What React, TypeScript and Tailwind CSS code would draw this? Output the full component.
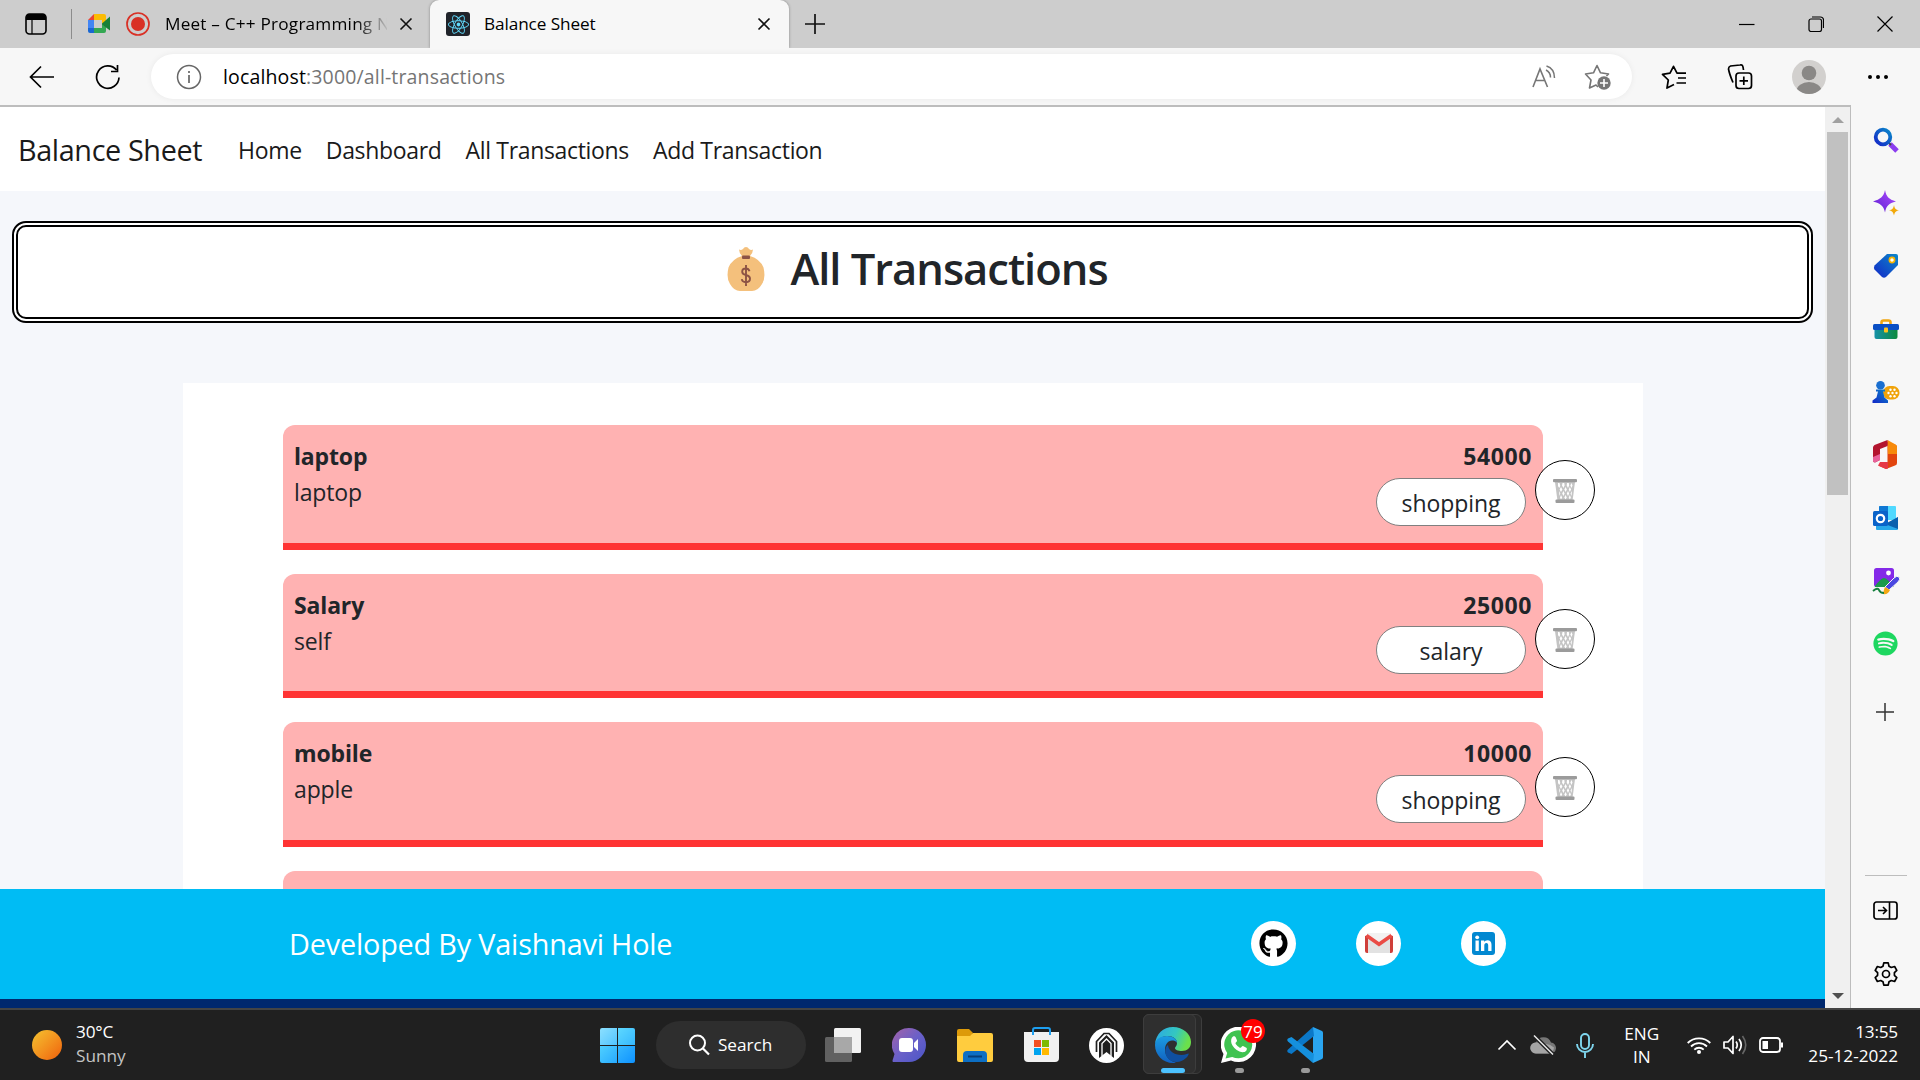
import React from "react";
import type { ReactNode } from "react";
import { FaGithub, FaSpotify, FaReact } from "react-icons/fa";

function Svg({ w = 24, h = 24, vb, children, cls = "" }: { w?: number; h?: number; vb?: string; children: ReactNode; cls?: string }) {
  return (
    <svg width={w} height={h} viewBox={vb ?? `0 0 ${w} ${h}`} fill="none" className={`shrink-0 ${cls}`}>
      {children}
    </svg>
  );
}

const CloseX = () => (
  <Svg w={14} h={14}>
    <path d="M1.5 1.5l11 11M12.5 1.5l-11 11" stroke="#111" strokeWidth="1.6" />
  </Svg>
);

function TabStrip() {
  return (
    <div className="flex h-12 bg-[#cdcdcd] text-[17.2px] text-black">
      <div className="flex w-[430px] items-center">
        <Svg w={22} h={22} cls="ml-[25px]">
          <rect x="1" y="1" width="20" height="20" rx="3.5" stroke="#000" strokeWidth="1.6" />
          <path d="M1 5a4 4 0 014-4h12a4 4 0 014 4v2H1z" fill="#000" />
          <path d="M7 7v14" stroke="#000" strokeWidth="1.2" />
        </Svg>
        <span className="ml-6 h-[30px] w-px bg-[#8c8c8c]" />
        <Svg w={24} h={20} cls="ml-4">
          <path d="M0 6l6-6v6z" fill="#ea4335" />
          <path d="M6 0h10a2 2 0 012 2v6l-4 2V6H6z" fill="#fbbc04" />
          <path d="M0 6h6v8H0z" fill="#4285f4" />
          <path d="M0 14h6v5H2a2 2 0 01-2-2z" fill="#1967d2" />
          <path d="M6 14h8v-4l4 3v4a2 2 0 01-2 2H6z" fill="#34a853" />
          <path d="M14 9.500L22 2.500v14l-8-6z" fill="#188038" />
        </Svg>
        <Svg w={24} h={24} cls="ml-[14px]">
          <circle cx="12" cy="12" r="11" stroke="#d93025" strokeWidth="1.7" />
          <circle cx="12" cy="12" r="7" fill="#d93025" />
        </Svg>
        <div className="ml-[15px] w-[222px] overflow-hidden whitespace-nowrap tracking-[0.2px] [mask-image:linear-gradient(to_right,#000_190px,transparent_225px)]">
          Meet – C++ Programming N
        </div>
        <span className="ml-[12px] flex">
          <CloseX />
        </span>
      </div>
      <div className="flex w-[359px] items-center rounded-t-[9px] bg-[#f7f7f7] shadow-[0_0_3px_rgba(0,0,0,0.35)]">
        <span className="ml-4 flex h-6 w-6 items-center justify-center rounded-[3px] bg-[#20232a] text-[#61dafb]">
          <FaReact size={21} />
        </span>
        <span className="ml-[14px] w-[273px] tracking-[-0.1px]">Balance Sheet</span>
        <CloseX />
      </div>
      <div className="flex flex-1 items-center">
        <Svg w={22} h={22} cls="ml-[15px]">
          <path d="M11 1v20M1 11h20" stroke="#111" strokeWidth="1.7" />
        </Svg>
        <div className="ml-auto mr-[27px] flex items-center gap-[53px]">
          <Svg w={16} h={16}>
            <path d="M0 8.500h15.500" stroke="#000" strokeWidth="1.2" />
          </Svg>
          <Svg w={16} h={16}>
            <rect x="1" y="3" width="12.500" height="12.500" rx="2" stroke="#000" strokeWidth="1.2" />
            <path d="M4 1h8.500a3 3 0 013 3v8" stroke="#000" strokeWidth="1.2" />
          </Svg>
          <Svg w={16} h={16}>
            <path d="M.5 .5l15 15M15.500 .5l-15 15" stroke="#000" strokeWidth="1.2" />
          </Svg>
        </div>
      </div>
    </div>
  );
}

function Toolbar() {
  return (
    <div className="relative flex h-[57px] items-center bg-[#f7f7f7]">
      <Svg w={26} h={24} cls="ml-[29px]">
        <path d="M12 1.500L1.500 12L12 22.500M1.500 12H25" stroke="#000" strokeWidth="1.7" />
      </Svg>
      <Svg w={26} h={26} cls="ml-[40px]">
        <path d="M24 13.500A11.200 11.200 0 1121.500 6M22.500 1v6.500H16" stroke="#000" strokeWidth="1.7" />
      </Svg>
      <div className="ml-[30px] flex h-[45px] w-[1481px] items-center rounded-full bg-white shadow-[0_0_6px_rgba(0,0,0,0.06)]">
        <Svg w={26} h={26} cls="ml-[25px]">
          <circle cx="13" cy="13" r="11.500" stroke="#666" strokeWidth="1.5" />
          <path d="M13 11v8M13 7v2" stroke="#666" strokeWidth="1.7" />
        </Svg>
        <span className="ml-[21px] whitespace-nowrap pt-px text-[19.500px] tracking-[0.150px] text-[#757575]">
          <span className="text-black">localhost</span>:3000/all-transactions
        </span>
        <Svg w={24} h={24} cls="ml-auto">
          <path d="M1 22L8 4l7.500 18M3.500 15.500h9.500" stroke="#767676" strokeWidth="1.6" />
          <path d="M14 5c3 1.500 4.500 4 4.500 7.500M14.500 1c4.700 1.500 8 5.500 8 12" stroke="#767676" strokeWidth="1.500" />
        </Svg>
        <Svg w={28} h={26} cls="ml-[28px] mr-[20px]">
          <path d="M14 23l-2-2-6.500 3L7 16 1.500 10l8-1.200L13 1.500l3.500 7.300 8 1.200-2 2" stroke="#767676" strokeWidth="1.600" strokeLinejoin="round" />
          <circle cx="20" cy="19" r="6.700" fill="#767676" />
          <path d="M20 15v8M16 19h8" stroke="#fff" strokeWidth="1.600" />
        </Svg>
      </div>
      <Svg w={26} h={24} cls="ml-[29px]">
        <path d="M13 19.500L6 23l1.300-8L1.500 9.300l7.500-1.200L12.500 1.300l3.500 6.800h9M17 13h8M15.500 18h9.500" stroke="#000" strokeWidth="1.700" strokeLinejoin="round" />
      </Svg>
      <Svg w={26} h={26} cls="ml-[40px]">
        <rect x="9" y="9" width="15.500" height="15.500" rx="3" stroke="#000" strokeWidth="1.700" />
        <path d="M16.800 12.500v8.500M12.500 16.800H21M6 18.500C4.500 15 2 8 1.500 5c0-2 .5-2.500 2-3L13 1c2.500-.5 3 .5 3.500 5" stroke="#000" strokeWidth="1.700" />
      </Svg>
      <Svg w={34} h={34} cls="ml-[39px]">
        <clipPath id="avatar">
          <circle cx="17" cy="17" r="17" />
        </clipPath>
        <g clipPath="url(#avatar)">
          <path d="M0 0h34v34H0z" fill="#d2d0ce" />
          <circle cx="17" cy="13" r="7.300" fill="#8a8886" />
          <ellipse cx="17" cy="31" rx="12.500" ry="9" fill="#8a8886" />
        </g>
      </Svg>
      <Svg w={20} h={6} cls="ml-[42px]">
        <path d="M2 3h.01M10 3h.01M18 3h.01" stroke="#000" strokeWidth="4" strokeLinecap="round" />
      </Svg>
    </div>
  );
}

const MoneyBag = () => (
  <Svg w={38} h={44}>
    <path d="M12 2.500q2 1 4-.5 1-2 3-2t3 2q2 1.500 4 .5 0 3-3 6.500h-8Q12 5.500 12 2.500z" fill="#f4c07c" />
    <path d="M15 9h8q10 3 13.500 11.500Q39 31 35 37q-4 7-10 7H13Q7 44 3 37-1 31 1.500 20.500 5 12 15 9z" fill="#f4c07c" />
    <rect x="15" y="8.500" width="8" height="3.400" rx="1" fill="#8d5345" />
    <path d="M22.500 24.200q-.8-2.700-3.700-2.700-3.600 0-3.600 3.200 0 2.500 3.800 3.300 4 1 4 3.800 0 3.400-4 3.400-3.800 0-4.200-3M19 18v21" stroke="#8d5345" strokeWidth="1.900" />
  </Svg>
);

const Basket = () => (
  <Svg w={24} h={25}>
    <path d="M2 3l2.500 19h15L22 3z" fill="#c4c4c4" />
    <g fill="#fff">
      <path d="M5 4l1.500-.1.800 3L6.200 9 5 7zM9.500 4h1.800l.3 2.500-1.200 2.500L9 6.500zM14 4h1.800l.4 2.500L15 9l-1.300-2.500zM18.500 4l1 2.500-1 2.500-1.200-2.500zM8 8l1.400 2.500L8 13l-1.400-2.500zM12.600 8l1.300 2.500-1.300 2.500-1.300-2.500zM16.900 8l1.200 2.500-1.200 2.500-1.200-2.500zM6 12l1.300 2.500L6.500 17zM10.400 12l1.200 2.500-1.200 2.500-1.200-2.500zM15 12l1.200 2.500L15 17l-1.200-2.500zM19 12l-.5 5-1-2.500zM8 16l1.200 2.500L8 20.500l-1-2zM12.600 16l1.200 2.500-1.200 2-1.300-2zM16.900 16l1 2.500-1 2-1.200-2z" />
    </g>
    <rect x="0" y="0" width="24" height="3.200" rx="1" fill="#9b9b9b" />
    <rect x="2.500" y="20.500" width="19" height="3.500" rx="1" fill="#9b9b9b" />
  </Svg>
);

const transactions = [
  { title: "laptop", note: "laptop", amount: "54000", category: "shopping" },
  { title: "Salary", note: "self", amount: "25000", category: "salary" },
  { title: "mobile", note: "apple", amount: "10000", category: "shopping" },
  { title: "", note: "", amount: "", category: "" },
];

function TransactionCard({ t }: { t: (typeof transactions)[number] }) {
  return (
    <div className="relative mb-[24px] flex h-[124.600px] justify-between rounded-t-[12px] border-b-[7px] border-[#ff3333] bg-[#ffb2b2] pl-3 pr-3 pt-[13px] text-[23px] leading-9 text-[#212529]">
      {t.title && (
        <>
          <div className="-ml-px tracking-[-0.150px]">
            <div className="font-bold">{t.title}</div>
            <div>{t.note}</div>
          </div>
          <div className="flex flex-col items-end">
            <div className="-mr-px font-bold tracking-[0.600px]">{t.amount}</div>
            <div className="mr-[5px] mt-[3.600px] flex h-12 w-[150px] items-center justify-center rounded-[24px] border border-[#808080] bg-white pt-[2px] tracking-[-0.050px]">
              {t.category}
            </div>
          </div>
          <button className="absolute -right-[52px] top-[35px] flex h-[60px] w-[60px] items-center justify-center rounded-full border border-black bg-white pt-[3px]">
            <Basket />
          </button>
        </>
      )}
    </div>
  );
}

function Page() {
  return (
    <div className="flex w-[1825px] flex-col overflow-hidden bg-[#f5f7fb]">
      <nav className="flex h-[84px] shrink-0 items-center bg-white pl-[18px] pt-[2px] text-[23px] text-[#1a1a1a]">
        <span className="mr-[36px] text-[28.800px] tracking-[-0.380px]">Balance Sheet</span>
        <div className="flex gap-6 tracking-[-0.330px]">
          <span>Home</span>
          <span>Dashboard</span>
          <span>All Transactions</span>
          <span>Add Transaction</span>
        </div>
      </nav>
      <div className="ml-3 mt-[30px] flex h-[102px] w-[1801px] shrink-0 justify-center rounded-[14px] border-[6px] border-double border-black bg-white pl-[10px] pt-5">
        <MoneyBag />
        <h1 className="-mt-[5px] ml-[25px] text-[43.500px] font-semibold leading-[54px] tracking-[-1px] text-[#212529]">All Transactions</h1>
      </div>
      <div className="ml-[183px] mt-[60px] h-[506px] w-[1460px] shrink-0 overflow-hidden bg-white px-[100px] pt-[42px]">
        {transactions.map((t, i) => (
          <TransactionCard key={i} t={t} />
        ))}
      </div>
      <footer className="flex h-[110px] shrink-0 items-center bg-[#00bcf4] pl-[289px] text-[28.800px] text-white">
        <span className="tracking-[-0.180px]">Developed By Vaishnavi Hole</span>
        <div className="ml-auto mr-[319px] flex gap-[60px] pb-[2px]">
          <span className="flex h-[45px] w-[45px] items-center justify-center rounded-full bg-white text-black">
            <FaGithub size={29} />
          </span>
          <span className="flex h-[45px] w-[45px] items-center justify-center rounded-full bg-white">
            <Svg w={28} h={21}>
              <path d="M2 0h24v20H3z" fill="#f2f2f2" />
              <path d="M4 20l10-9 10 9z" fill="#dcdcdc" />
              <path d="M3 4l11 8v8H3zM25 4v16H14v-8z" fill="#e2e2e2" />
              <path d="M0 3l3-1v18H2a2 2 0 01-2-2zM28 3l-3-1v18h1a2 2 0 002-2z" fill="#cf3f3a" />
              <path d="M1.500 2.500L14 11.200 26.500 2.500" stroke="#ea4c46" strokeWidth="3.600" />
            </Svg>
          </span>
          <span className="flex h-[45px] w-[45px] items-center justify-center rounded-full bg-white">
            <Svg w={23} h={23}>
              <rect width="23" height="23" rx="3" fill="#0288d1" />
              <path d="M3.500 8.500h3.300v10.500H3.500zM9 8.500h3.200v1.600c.7-1.100 1.700-1.800 3.300-1.800 2.700 0 4 1.600 4 4.500V19h-3.300v-5.500c0-1.500-.5-2.400-1.800-2.400-1.400 0-2.100 1-2.100 2.500V19H9z" fill="#fff" />
              <circle cx="5.200" cy="5.300" r="1.900" fill="#fff" />
            </Svg>
          </span>
        </div>
      </footer>
      <div className="h-[9px] shrink-0 bg-[#00286e]" />
    </div>
  );
}

function Scrollbar() {
  return (
    <div className="flex w-[25px] flex-col items-center justify-between bg-[#f0f0f0]">
      <div className="flex flex-col items-center">
        <Svg w={12} h={6} cls="mt-[10px]">
          <path d="M0 6l6-6 6 6z" fill="#a0a0a0" />
        </Svg>
        <div className="mt-[9px] h-[363px] w-[21px] bg-[#c1c1c1]" />
      </div>
      <Svg w={12} h={6} cls="mb-[9px]">
        <path d="M0 0l6 6 6-6z" fill="#505050" />
      </Svg>
    </div>
  );
}

const sideIcons: ReactNode[] = [
  <Svg w={26} h={26}>
    <path d="M17 17l7 7" stroke="#8b3df0" strokeWidth="5" />
    <path d="M15.500 15.500l2.500 2.500" stroke="#444" strokeWidth="2" />
    <circle cx="10" cy="10" r="7.300" stroke="url(#gb)" strokeWidth="3.800" />
  </Svg>,
  <Svg w={26} h={26}>
    <path d="M12 0c1.500 7 3.500 9 11 11.500-7.500 2-9.500 4-11 11-1.500-7-4.500-9-12-11C7.500 9 10.500 7 12 0z" fill="url(#gp)" />
    <path d="M21 15c.7 3.500 1.500 4.500 5 5.300-3.500.9-4.300 2-5 5.300-.7-3.300-1.500-4.400-5-5.300 3.500-.8 4.300-1.800 5-5.300z" fill="#f2a90a" />
  </Svg>,
  <Svg w={26} h={26}>
    <path d="M14 1h9q2 0 2 2v9L13 24q-2 1.500-4 0L1.500 16.500q-1-2 0-4z" fill="url(#gb)" />
    <circle cx="19" cy="7" r="2.600" fill="#fff" stroke="#f5b301" strokeWidth="1.700" />
  </Svg>,
  <Svg w={26} h={20}>
    <path d="M8.500 6V3.500q0-2 2-2h5q2 0 2 2V6" stroke="#f0a511" strokeWidth="2.600" />
    <rect x="1.500" y="8" width="23" height="12" rx="2" fill="url(#gt)" />
    <rect x="0" y="5" width="26" height="6" rx="1.500" fill="#0a4fc4" />
    <rect x="11" y="8.500" width="4" height="5" rx="1" fill="#ffc21c" />
  </Svg>,
  <Svg w={28} h={22}>
    <rect x="11" y="5" width="16.500" height="13.500" rx="6.500" fill="#f0a30a" />
    <g fill="#fff">
      <circle cx="18.500" cy="8.800" r="1.200" />
      <circle cx="22.500" cy="8.800" r="1.200" />
      <circle cx="16.500" cy="12" r="1.200" />
      <circle cx="20.500" cy="12" r="1.200" />
      <circle cx="24.500" cy="12" r="1.200" />
      <circle cx="18.500" cy="15.200" r="1.200" />
      <circle cx="22.500" cy="15.200" r="1.200" />
    </g>
    <circle cx="8.500" cy="4.300" r="4.300" fill="#1a6fd0" />
    <path d="M4 8.500h9v2h-2l1.500 6 3.500 3V22H.5v-2.500l4-3 1.500-6H4z" fill="url(#gb)" />
  </Svg>,
  <Svg w={25} h={30}>
    <path d="M13 1l9 3.500q2 .8 2 2.500v16q0 2-2 2.600L13 29 5 25.500h9.500V6z" fill="#e2450e" />
    <path d="M14.500 0l8 4.500q1.500.8 1.500 2.500v7h-9z" fill="#f78a0b" />
    <path d="M14.500 0v6L7 9v11l-5 2.500q-2 0-2-2V7.500Q0 6 1.500 5z" fill="#b3152f" />
    <path d="M0 17l7-3v6l-5 2.500q-2 0-2-2z" fill="#e8629b" />
    <path d="M5 25.500L7 22h8v6.500l-2 .5z" fill="#e63946" />
  </Svg>,
  <Svg w={25} h={24}>
    <rect x="6" y="0" width="17" height="14" rx="1" fill="#50d9ff" />
    <path d="M6 1q0-1 1-1h8v7H6z" fill="#0f78d4" />
    <path d="M3 12l11 6 11-7v12q0 1-1 1H4q-1 0-1-1z" fill="#28a8ea" />
    <path d="M12 18l13-7v12z" fill="#0a5fae" />
    <rect x="0" y="5" width="15" height="15" rx="1.500" fill="#0a63c9" />
    <circle cx="7.500" cy="12.500" r="3.700" stroke="#fff" strokeWidth="2.200" />
  </Svg>,
  <Svg w={28} h={28}>
    <rect x="2" y="1" width="20" height="19" rx="2.500" fill="#8429e8" />
    <path d="M3 19q6-8 9-8t10 9H3z" fill="#1c9a4c" />
    <circle cx="16.500" cy="6" r="2.400" fill="#fff" />
    <path d="M27 10q2 2-1 5l-9 8-4-3 9-9q3-3 5-1z" fill="#4b48e0" stroke="#f7f7f7" strokeWidth="1" />
    <path d="M13 20l5 3q-2 5-7 4 1-5 2-7z" fill="#f3a712" />
    <path d="M1 24q5-4 6-1t5 3" stroke="#15803d" strokeWidth="2" />
  </Svg>,
  <FaSpotify size={25} className="text-[#1ed760]" />,
];

function EdgeSidebar() {
  return (
    <aside className="flex flex-1 flex-col items-center border-l border-[#bdbdbd] bg-[#f7f7f7] pt-[3px]">
      <svg width="0" height="0" className="absolute">
        <linearGradient id="gb" x1="0" y1="1" x2="1" y2="0">
          <stop stopColor="#1428c8" />
          <stop offset="1" stopColor="#0b87c9" />
        </linearGradient>
        <linearGradient id="gp" x1="0" y1="1" x2="1" y2="0">
          <stop stopColor="#5b1fd0" />
          <stop offset="1" stopColor="#b04bff" />
        </linearGradient>
        <linearGradient id="gt" x1="0" y1="0" x2="1" y2="0">
          <stop stopColor="#1691a8" />
          <stop offset="1" stopColor="#0c8a3c" />
        </linearGradient>
      </svg>
      {sideIcons.map((ic, i) => (
        <div key={i} className="flex h-[63px] items-center justify-center">{ic}</div>
      ))}
      <Svg w={18} h={18} cls="mr-[2px] mt-[28px]">
        <path d="M9 0v18M0 9h18" stroke="#333" strokeWidth="1.500" />
      </Svg>
      <div className="mt-auto h-px w-[42px] bg-[#bdbdbd]" />
      <Svg w={25} h={19} cls="mt-[25px]">
        <rect x="1" y="1" width="23" height="17" rx="2.500" stroke="#000" strokeWidth="1.700" />
        <path d="M16.500 1v17M5 9.500h8.500M10 6l3.500 3.500L10 13" stroke="#000" strokeWidth="1.600" />
      </Svg>
      <Svg w={26} h={26} cls="mb-[21px] mt-[41px]">
        <path d="M10.800 1h4.400l.8 3.300 2.300 1.300 3.300-1 2.200 3.900-2.400 2.300v2.600l2.400 2.300-2.200 3.900-3.300-1-2.300 1.300-.8 3.300h-4.400l-.8-3.300-2.300-1.300-3.300 1-2.200-3.900 2.400-2.300v-2.600L2.200 8.500l2.200-3.900 3.300 1L10 4.300z" transform="translate(0 .9)" stroke="#000" strokeWidth="1.700" strokeLinejoin="round" />
        <circle cx="13" cy="13" r="3.500" stroke="#000" strokeWidth="1.700" />
      </Svg>
    </aside>
  );
}

const Cell = ({ children, dot }: { children: ReactNode; dot?: boolean }) => (
  <div className="relative flex h-full w-[66px] items-center justify-center">
    {children}
    {dot && <span className="absolute bottom-[7px] h-[5px] w-[9px] rounded-full bg-[#9a9a9a]" />}
  </div>
);

function Taskbar() {
  return (
    <div className="flex h-[72px] items-center border-t-2 border-[#444] bg-[#202020] text-[17.200px] text-white">
      <div className="flex w-[600px] items-center">
        <span className="ml-8 h-[30px] w-[30px] rounded-full bg-linear-to-br from-[#f2c230] to-[#ee5e0a]" />
        <div className="-mt-[2px] ml-[14px] leading-6">
          <div className="tracking-[-0.200px]">30°C</div>
          <div className="text-[#c4c4c4]">Sunny</div>
        </div>
      </div>
      <div className="grid h-[35px] w-[35px] grid-cols-2 gap-px overflow-hidden rounded-[2px]">
        <span className="bg-linear-to-br from-[#8be0ff] to-[#50c4ff]" />
        <span className="bg-linear-to-br from-[#5dd8ff] to-[#35b8ff]" />
        <span className="bg-linear-to-br from-[#4fd0ff] to-[#27aaff]" />
        <span className="bg-linear-to-br from-[#35b8ff] to-[#0d92ff]" />
      </div>
      <div className="ml-[21px] flex h-12 w-[150px] items-center rounded-full bg-[#2e2e2e]">
        <Svg w={22} h={22} cls="ml-[32px]">
          <circle cx="9.500" cy="9" r="7.500" stroke="#fff" strokeWidth="2" />
          <path d="M15 14.500l6 6" stroke="#fff" strokeWidth="2.200" />
        </Svg>
        <span className="ml-2 tracking-[-0.050px]">Search</span>
      </div>
      <div className="ml-[4px] flex h-full">
        <Cell>
          <Svg w={36} h={34}>
            <rect x="9" y="0" width="27" height="25" rx="1.500" fill="#f2f2f2" />
            <rect x="0" y="9" width="27" height="25" rx="1.500" fill="#6d6d6d" fillOpacity=".85" />
            <path d="M9 9h18v16H9z" fill="#a8a8a8" />
          </Svg>
        </Cell>
        <Cell>
          <Svg w={34} h={35}>
            <defs>
              <linearGradient id="chat" x1="0" y1="0" x2="1" y2="1">
                <stop stopColor="#a562a8" />
                <stop offset=".5" stopColor="#6a60c8" />
                <stop offset="1" stopColor="#4a55c8" />
              </linearGradient>
            </defs>
            <path d="M17 0a17 17 0 110 34H1q-1-1 0-3l1.500-5A17 17 0 0117 0z" fill="url(#chat)" />
            <rect x="7" y="10" width="14" height="14" rx="3" fill="#fff" />
            <path d="M22 15l4-4v12l-4-4z" fill="#fff" />
          </Svg>
        </Cell>
        <Cell>
          <Svg w={36} h={33}>
            <path d="M0 2q0-2 2-2h10l4 4-3 5H0z" fill="#dd9a09" />
            <path d="M0 7h13l3-3h18q2 0 2 2v25q0 2-2 2H2q-2 0-2-2z" fill="#ffcc3e" />
            <path d="M6 33v-7q0-4 4-4h16q4 0 4 4v7z" fill="#0d6fc4" />
            <path d="M11 27.500h14" stroke="#063e78" strokeWidth="2" />
          </Svg>
        </Cell>
        <Cell>
          <Svg w={35} h={36}>
            <path d="M0 5h35v26q0 4-4 4H4q-4 0-4-4z" fill="#f1f1f1" />
            <path d="M9 8V3q0-2 2-2h13q2 0 2 2v5" stroke="#1d9ff0" strokeWidth="2" />
            <path d="M10 13h7v7h-7z" fill="#f25022" />
            <path d="M18 13h7v7h-7z" fill="#7fba00" />
            <path d="M10 21h7v7h-7z" fill="#00a4ef" />
            <path d="M18 21h7v7h-7z" fill="#ffb900" />
          </Svg>
        </Cell>
        <Cell>
          <Svg w={35} h={35} cls="-ml-[2px]">
            <circle cx="17.500" cy="17.500" r="17.500" fill="#fff" />
            <path d="M7.500 24V13.500L15 5.500h5l7.500 8V24" stroke="#202020" strokeWidth="1.700" />
            <path d="M10 30V14.500L17.500 7l7.500 7.500V30l-7.500-6z" fill="#202020" />
            <path d="M13 28V15.500l4.500-4.500 4.500 4.500V28" stroke="#fff" strokeWidth="1.300" />
          </Svg>
        </Cell>
        <div className="relative flex h-full w-[66px] items-center justify-center">
          <span className="absolute left-[3px] top-[4px] h-[60px] w-[59px] rounded-[6px] border border-[#3d3d3d] bg-[#292929]" />
          <span className="absolute left-[3px] top-[4px] h-[60px] w-[53px] rounded-[6px] border border-[#3d3d3d] bg-[#2f2f2f]" />
          <Svg w={36} h={36} cls="relative">
            <defs>
              <linearGradient id="e1" x1="0" y1="0" x2="1" y2=".3">
                <stop stopColor="#2aa6e8" />
                <stop offset=".6" stopColor="#34c7c0" />
                <stop offset="1" stopColor="#6be04b" />
              </linearGradient>
              <linearGradient id="e2" x1="0" y1="0" x2="0" y2="1">
                <stop stopColor="#1b9de2" />
                <stop offset="1" stopColor="#1160c0" />
              </linearGradient>
            </defs>
            <path d="M0 17C1 7 8 0 18 0s18 7 18 15c0 6-4 9-9 9-4 0-7-1-7-3 0-1 2-2 2-5 0-4-4-7-9-7C7 9 2 12 0 17z" fill="url(#e1)" />
            <path d="M0 18C0 12 6 9 12 9c6 0 10 3 10 7-1-2-3-2.500-5-2.500-4 0-7 4-7 9 0 7 5 12 11 13-1 .4-2 .5-3 .5C8 36 0 28 0 18z" fill="url(#e2)" />
            <path d="M13 18c-3 2-4 8-1 12 4 6 13 7 19 1 2-2 3-4 2.500-4.500-.5-.4-3 1.500-7 1.500-7 0-13-4-13.500-10z" fill="#0f4fa0" />
          </Svg>
          <span className="absolute bottom-[7px] h-[5px] w-6 rounded-full bg-[#4cc2ff]" />
        </div>
        <Cell dot>
          <Svg w={36} h={36}>
            <path d="M0 36l2.500-9A17.700 17.700 0 1110 33.500z" fill="#fff" />
            <path d="M4.500 31.500l1.700-5.500a14 14 0 115 4z" fill="#3fc351" />
            <path d="M12 9.500c1.500-.6 2.500 0 3 1.500l1 2.500c.3 1-1.500 2-1.500 2.700 0 1 3.500 4.500 5 4.600.8 0 1.700-2 2.500-1.700l3.300 1.600c1 .5.500 2.500-.3 3.300-1.500 1.500-4 1.500-6.500.4-4-1.800-7-5-8-8-.7-2.500-.5-5.500 1.500-6.900z" fill="#fff" />
          </Svg>
          <span className="absolute left-[35px] top-[9px] flex h-6 w-6 items-center justify-center rounded-full bg-[#f00] text-[17px] font-normal leading-none">79</span>
        </Cell>
        <Cell dot>
          <Svg w={36} h={36}>
            <path d="M26 0l9 4q1 .6 1 2v24q0 1.400-1 2l-9 4z" fill="#2aa5f0" />
            <path d="M26 0l1 9L4.500 27 1 25.500q-1.500-1.500 0-3z" fill="#0b78c8" />
            <path d="M26 36l1-9L4.500 10 1 11.500q-1.500 1.500 0 3z" fill="#1590dd" />
          </Svg>
        </Cell>
      </div>
      <div className="ml-auto flex h-full items-center">
        <Svg w={20} h={12}>
          <path d="M1.500 10.500L10 2l8.500 8.500" stroke="#fff" strokeWidth="1.700" />
        </Svg>
        <Svg w={26} h={22} cls="ml-[13px]">
          <path d="M6 19.500a5.500 5.500 0 010-11 8 8 0 0115 0 5.500 5.500 0 01-1 11z" fill="#777" />
          <path d="M6 19.500a5.500 5.500 0 01-.500-11Q10 8 12 11q6-3 12 2.500-1 6-4 6z" fill="#a5a5a5" />
          <path d="M4 1.500l19 19" stroke="#202020" strokeWidth="4" />
          <path d="M4 1.500l19 19" stroke="#eee" strokeWidth="1.500" />
        </Svg>
        <Svg w={18} h={25} cls="ml-[20px]">
          <rect x="5" y="1" width="8" height="15" rx="4" stroke="#7fd6ee" strokeWidth="1.900" />
          <path d="M1 11a8 8 0 0016 0M9 19.500V25" stroke="#7fd6ee" strokeWidth="1.900" />
        </Svg>
        <div className="ml-[30px] text-center leading-[23px]">
          <div>ENG</div>
          <div>IN</div>
        </div>
        <Svg w={24} h={18} cls="ml-[28px]">
          <path d="M.7 7a16 16 0 0122.600 0M4 10.500a11.400 11.400 0 0116 0M7.300 13.700a6.700 6.700 0 019.400 0" stroke="#fff" strokeWidth="1.800" />
          <circle cx="12" cy="16" r="2" fill="#fff" />
        </Svg>
        <Svg w={25} h={20} cls="ml-[12px]">
          <path d="M1 7h4l5-5.500v17L5 13H1z" stroke="#fff" strokeWidth="1.700" strokeLinejoin="round" />
          <path d="M13 6.500q2.500 3.500 0 7M16 4q4.500 6 0 12" stroke="#fff" strokeWidth="1.700" />
          <path d="M19.500 1q6.500 9 0 18" stroke="#666" strokeWidth="1.600" />
        </Svg>
        <Svg w={25} h={16} cls="ml-[11px]">
          <rect x="1" y="1" width="20" height="14" rx="3" stroke="#fff" strokeWidth="1.800" />
          <path d="M3.500 4h5.500v8H3.500zM22 5.500h2v5h-2z" fill="#fff" />
        </Svg>
        <div className="-mt-[2px] ml-[24px] mr-[22px] text-right leading-6">
          <div className="tracking-[-0.200px]">13:55</div>
          <div>25-12-2022</div>
        </div>
      </div>
    </div>
  );
}

export default function App() {
  return (
    <div className="flex h-[1080px] w-[1920px] flex-col overflow-hidden font-['Open_Sans','Noto_Sans',sans-serif]">
      <TabStrip />
      <Toolbar />
      <div className="flex h-[903px]">
        <div className="flex w-[1850px] border-t-2 border-[#bdbdbd]">
          <Page />
          <Scrollbar />
        </div>
        <EdgeSidebar />
      </div>
      <Taskbar />
    </div>
  );
}
